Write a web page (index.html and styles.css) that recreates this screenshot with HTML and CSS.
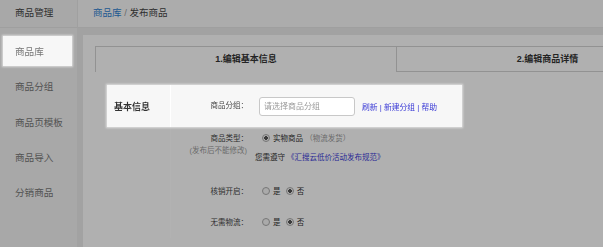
FILE: index.html
```html
<!DOCTYPE html>
<html lang="zh-CN">
<head>
    <meta charset="UTF-8">
    <meta name="viewport" content="width=device-width, initial-scale=1.0">
    <title>发布商品</title>
    <link rel="stylesheet" href="styles.css">
</head>
<body>
    <div class="layout">
        <aside class="sidebar">
            <div class="side-title">商品管理</div>
            <nav class="side-nav">
                <a class="side-item tour-spot" href="#">商品库</a>
                <a class="side-item" href="#">商品分组</a>
                <a class="side-item" href="#">商品页模板</a>
                <a class="side-item" href="#">商品导入</a>
                <a class="side-item" href="#">分销商品</a>
            </nav>
        </aside>

        <main class="main">
            <div class="crumbs">
                <a href="#">商品库</a> <span class="sep">/</span> 发布商品
            </div>

            <div class="content">
                <div class="panel">
                    <div class="tabs">
                        <div class="tab active">1.编辑基本信息</div>
                        <div class="tab">2.编辑商品详情</div>
                    </div>

                    <form class="form">
                        <div class="group tour-spot">
                            <div class="group-title">基本信息</div>
                            <div class="group-body">
                                <div class="row row-mid">
                                    <label class="label">商品分组：</label>
                                    <input class="text-input" type="text" placeholder="请选择商品分组">
                                    <span class="links">
                                        <a href="#">刷新</a> | <a href="#">新建分组</a> | <a href="#">帮助</a>
                                    </span>
                                </div>
                            </div>
                        </div>

                        <div class="group">
                            <div class="group-title"></div>
                            <div class="group-body">
                                <div class="row row-type">
                                    <div class="label">
                                        商品类型：
                                        <div class="sub">(发布后不能修改)</div>
                                    </div>
                                    <div class="control">
                                        <div>
                                            <input class="radio" type="radio" name="kind" checked>
                                            <span>实物商品</span> <span class="muted">（物流发货）</span>
                                        </div>
                                        <div class="rule">您需遵守 <a href="#">《汇搜云低价活动发布规范》</a></div>
                                    </div>
                                </div>

                                <div class="row row-opt">
                                    <label class="label">核销开启：</label>
                                    <div class="control">
                                        <input class="radio" type="radio" name="verify"> <span>是</span>
                                        <input class="radio" type="radio" name="verify" checked> <span>否</span>
                                    </div>
                                </div>

                                <div class="row row-opt">
                                    <label class="label">无需物流：</label>
                                    <div class="control">
                                        <input class="radio" type="radio" name="ship"> <span>是</span>
                                        <input class="radio" type="radio" name="ship" checked> <span>否</span>
                                    </div>
                                </div>
                            </div>
                        </div>
                    </form>
                </div>
            </div>
        </main>
    </div>

    <!-- guide mask, the .tour-spot elements sit above it -->
    <div class="tour-mask"></div>
</body>
</html>
```

FILE: styles.css
```css
body {
    margin: 0;
    font-family: "Liberation Sans", "Noto Sans CJK SC", sans-serif;
    color: #333;
    background-color: #e9e9e9;
    overflow: hidden;
}
a {
    text-decoration: none;
}
.layout {
    display: flex;
    height: 100vh;
}

/* sidebar */
.sidebar {
    width: 77px;
    flex-shrink: 0;
    background-color: #f1f1f1;
}
.side-title {
    height: 28px;
    line-height: 25px;
    padding-left: 15px;
    font-size: 9.6px;
    color: #444;
    border-bottom: 1px solid #e4e4e4;
    box-sizing: border-box;
}
.side-nav {
    display: flex;
    flex-direction: column;
    gap: 5.3px;
    padding-top: 8px;
}
.side-item {
    display: block;
    height: 30px;
    line-height: 31px;
    margin-left: 3px;
    width: 69px;
    padding-left: 12px;
    box-sizing: border-box;
    font-size: 9.6px;
    color: #777;
}

/* main */
.main {
    flex: 1;
    display: flex;
    flex-direction: column;
    min-width: 0;
}
.crumbs {
    height: 28px;
    line-height: 25px;
    padding-left: 15px;
    font-size: 9.5px;
    color: #444;
    background-color: #f7f7f7;
    border-left: 1px solid #e6e6e6;
    border-bottom: 1px solid #e4e4e4;
    box-sizing: border-box;
}
.crumbs a {
    color: #2f7fd0;
}
.crumbs .sep {
    color: #999;
}
.content {
    flex: 1;
    padding: 7px 0 0 6px;
    min-height: 0;
}
.panel {
    height: 100%;
    padding: 11px 0 0 12px;
    background-color: #fdfdfd;
    box-sizing: border-box;
    overflow: hidden;
}

/* tabs */
.tabs {
    display: flex;
    height: 26px;
    overflow: hidden;
}
.tab {
    width: 302px;
    flex-shrink: 0;
    text-align: center;
    line-height: 25px;
    font-size: 9px;
    font-weight: bold;
    color: #333;
    border: 1px solid #d2d2d2;
    border-left: none;
    box-sizing: border-box;
}
.tab.active {
    border-left: 1px solid #d2d2d2;
    border-bottom: none;
}

/* form */
.form {
    margin: 13px 0 0 12px;
    font-size: 7.5px;
}
.group {
    display: flex;
    width: 355px;
}
.group-title {
    width: 64px;
    flex-shrink: 0;
    padding-left: 7px;
    box-sizing: border-box;
    border-right: 1px solid #fff;
    font-size: 9px;
    font-weight: bold;
    color: #333;
    display: flex;
    align-items: center;
}
.group-body {
    flex: 1;
}
.row {
    display: flex;
}
.row-mid {
    height: 42px;
    align-items: center;
}
.row-type {
    padding-top: 6px;
    height: 43px;
}
.row-opt {
    height: 31px;
    align-items: center;
}
.label {
    width: 77px;
    flex-shrink: 0;
    text-align: right;
    color: #444;
    line-height: 12px;
}
.label .sub {
    color: #999;
    margin-right: 1px;
}
.text-input {
    width: 96px;
    height: 19px;
    margin-left: 11px;
    padding: 0 4px;
    border: 1px solid #c8c8c8;
    border-radius: 3px;
    box-sizing: border-box;
    font-family: inherit;
    font-size: 8px;
    color: #333;
    background-color: #fff;
}
.text-input::placeholder {
    color: #9a9a9a;
}
.links {
    margin-left: 7px;
    font-size: 7.8px;
    color: #3b3bd6;
}
.links a {
    color: #3b3bd6;
}
.control {
    margin-left: 14px;
    line-height: 12px;
    color: #333;
}
.control .muted {
    color: #999;
}
.rule {
    margin-top: 7px;
    margin-left: -7px;
}
.rule a {
    color: #3b3bd6;
}
.radio {
    -webkit-appearance: none;
    appearance: none;
    width: 8px;
    height: 8px;
    margin: 0 1px 0 0;
    border: 1px solid #aaa;
    border-radius: 50%;
    background-color: #f4f4f4;
    vertical-align: -1px;
}
.radio:checked {
    background: radial-gradient(circle, #555 0 1.6px, #f4f4f4 2px);
}
.row-opt .radio + span {
    margin-right: 3px;
}

/* guide mask */
.tour-mask {
    position: fixed;
    inset: 0;
    background-color: rgba(0, 0, 0, 0.3);
    z-index: 10;
}
.tour-spot {
    position: relative;
    z-index: 11;
    background-color: #f7f7f7;
    box-shadow: 0 0 2px 1px rgba(255, 255, 255, 0.6);
}
```
